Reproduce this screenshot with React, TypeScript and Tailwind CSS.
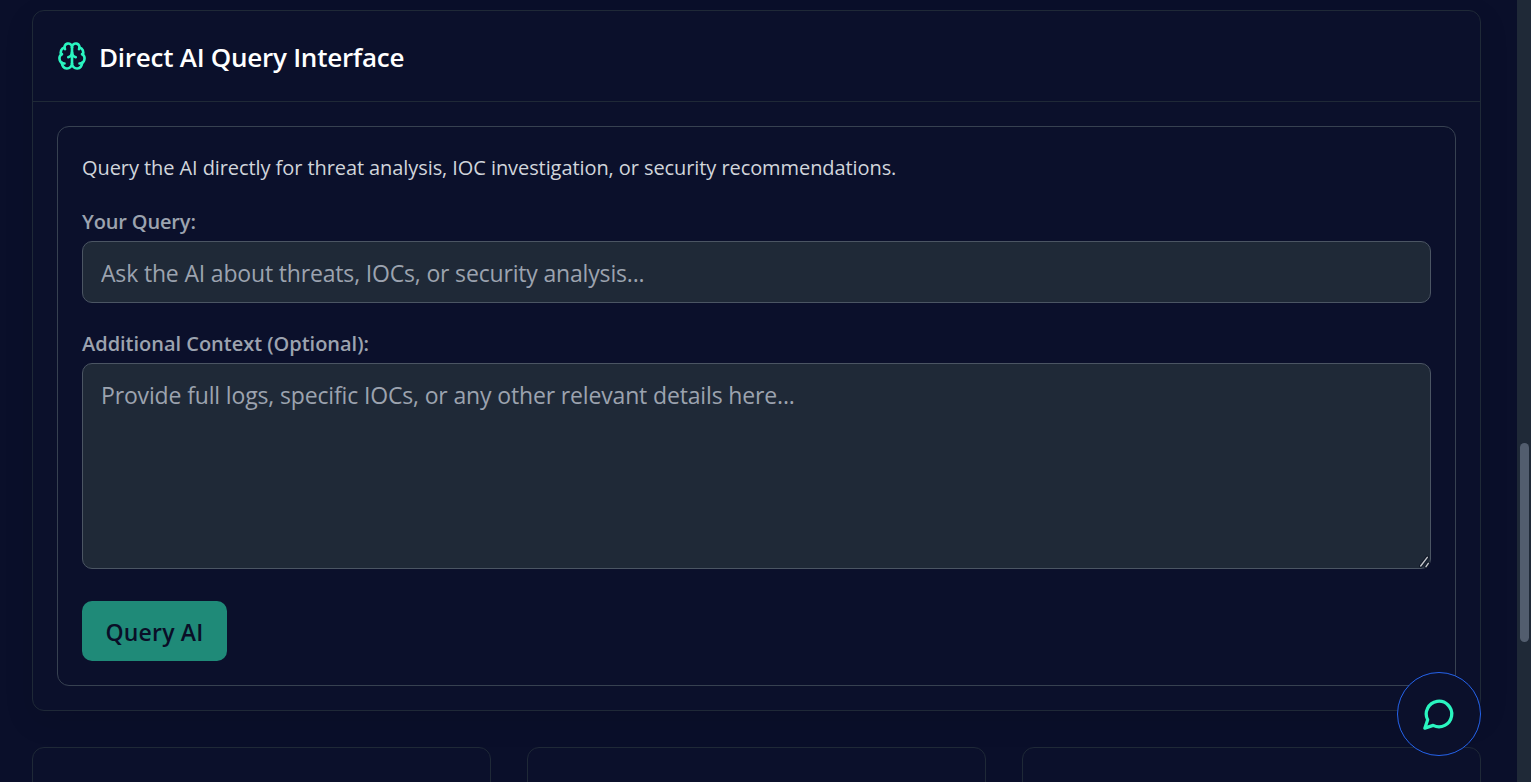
import { Brain } from "lucide-react";

export default function App() {
  return (
    <div className="relative flex h-[782px] w-full overflow-hidden bg-[#0a0f2a] font-['Open_Sans','Noto_Sans',sans-serif]">
      <main className="flex min-w-0 flex-1 flex-col gap-9 pl-8 pr-9 pt-2.5">
        <section className="shrink-0 rounded-xl border border-[#1f2937] bg-[#0b102b] shadow-[0_10px_30px_rgba(0,0,0,0.1)]">
          <header className="flex h-[91px] items-center gap-3 border-b border-[#1f2937] px-6">
            <Brain className="size-[30px] text-[#2af5c0]" strokeWidth={2.1} />
            <h2 className="pt-0.5 text-[26px] font-semibold leading-none tracking-[-0.25px] text-white">Direct AI Query Interface</h2>
          </header>
          <div className="p-6">
            <div className="flex flex-col rounded-xl border border-[#374151] px-6 pb-6 pt-[27px]">
              <p className="text-[20px] leading-7 tracking-[-0.08px] text-[#d1d5db]">Query the AI directly for threat analysis, IOC investigation, or security recommendations.</p>
              <label className="mt-[26px] text-[20px] font-semibold leading-7 tracking-[-0.15px] text-[#9ca3af]">Your Query:</label>
              <input
                placeholder="Ask the AI about threats, IOCs, or security analysis..."
                className="mt-[5px] h-[62px] w-full rounded-[10px] border border-[#4b5563] bg-[#1f2937] px-[18px] pt-0.5 text-[23px] tracking-[-0.17px] text-white outline-none placeholder:text-[#9ca3af]"
              />
              <label className="mt-[27px] text-[20px] font-semibold leading-7 tracking-[-0.02px] text-[#9ca3af]">Additional Context (Optional):</label>
              <div className="relative mt-[5px]">
                <textarea
                  placeholder="Provide full logs, specific IOCs, or any other relevant details here..."
                  className="block h-[206px] w-full resize-none rounded-[10px] border border-[#4b5563] bg-[#1f2937] px-[18px] py-[15px] text-[23px] leading-[32px] tracking-[-0.15px] text-white outline-none placeholder:text-[#9ca3af]"
                />
                <svg className="pointer-events-none absolute bottom-0 right-0 h-3.5 w-3" viewBox="0 0 12 14" fill="none" strokeLinecap="round">
                  <path d="M1.7 11 8.3 2.3M7 11.7 9.3 8.3" stroke="#111827" strokeWidth={3.5} />
                  <path d="M1.7 11 8.3 2.3M7 11.7 9.3 8.3" stroke="#c4c7cc" strokeWidth={1.4} />
                </svg>
              </div>
              <button className="mt-8 h-[60px] w-[145px] rounded-[10px] bg-[#1f8a78] pt-0.5 text-[23px] font-semibold tracking-[0.2px] text-[#0a0e27]">Query AI</button>
            </div>
          </div>
        </section>
        <div className="grid shrink-0 grid-cols-3 gap-9">
          <div className="h-40 rounded-xl border border-[#1f2937] bg-[#0b102b]" />
          <div className="h-40 rounded-xl border border-[#1f2937] bg-[#0b102b]" />
          <div className="h-40 rounded-xl border border-[#1f2937] bg-[#0b102b]" />
        </div>
      </main>
      <div className="w-3.5 shrink-0 bg-[#1f2937]">
        <div className="ml-[3px] mt-[443px] h-[199px] w-[9px] rounded-full bg-[#525d6e]" />
      </div>
      <button className="absolute left-[1397px] top-[672px] flex size-[84px] items-center justify-center rounded-full border border-[#2563eb] bg-[#0b102b]">
        <svg className="size-[34px] text-[#2af5c0]" viewBox="0 0 24 24" fill="none" stroke="currentColor" strokeWidth={2.3} strokeLinecap="round" strokeLinejoin="round">
          <path d="M7.9 20A9 9 0 1 0 4 16.1L2 22Z" />
        </svg>
      </button>
    </div>
  );
}
